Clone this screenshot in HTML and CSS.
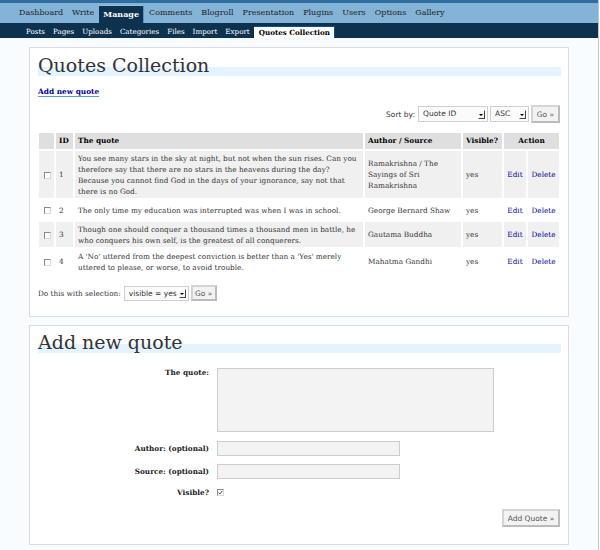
FILE: index.html
```html
<!DOCTYPE html>
<html>
<head>
<meta charset="utf-8">
<title>Quotes Collection</title>
<link rel="stylesheet" href="styles.css">
</head>
<body>
<div class="page">
  <div class="wphead"></div>
  <ul class="adminmenu">
    <li><a href="#">Dashboard</a></li>
    <li><a href="#">Write</a></li>
    <li><a href="#" class="current">Manage</a></li>
    <li><a href="#">Comments</a></li>
    <li><a href="#">Blogroll</a></li>
    <li><a href="#">Presentation</a></li>
    <li><a href="#">Plugins</a></li>
    <li><a href="#">Users</a></li>
    <li><a href="#">Options</a></li>
    <li><a href="#">Gallery</a></li>
  </ul>
  <ul class="submenu">
    <li><a href="#">Posts</a></li>
    <li><a href="#">Pages</a></li>
    <li><a href="#">Uploads</a></li>
    <li><a href="#">Categories</a></li>
    <li><a href="#">Files</a></li>
    <li><a href="#">Import</a></li>
    <li><a href="#">Export</a></li>
    <li><a href="#" class="current">Quotes Collection</a></li>
  </ul>

  <div class="wrap first">
    <h2>Quotes Collection</h2>
    <p class="addlink"><a href="#addnew" class="link">Add new quote</a></p>
    <form class="sortbar">
      <label class="sortlabel">Sort by:</label>
      <span class="select sel-field"><select><option>Quote ID</option></select><span class="arrow"></span></span>
      <span class="select sel-order"><select><option>ASC</option></select><span class="arrow"></span></span>
      <button type="button" class="btn btn-go">Go »</button>
    </form>
    <table class="quotes">
      <colgroup>
        <col class="c-cb"><col class="c-id"><col class="c-quote"><col class="c-author"><col class="c-vis"><col class="c-edit"><col class="c-del">
      </colgroup>
      <thead>
        <tr><th></th><th>ID</th><th>The quote</th><th>Author / Source</th><th>Visible?</th><th colspan="2" class="center">Action</th></tr>
      </thead>
      <tbody>
        <tr class="alt">
          <td class="cb"><span class="check"></span></td>
          <td>1</td>
          <td>You see many stars in the sky at night, but not when the sun rises. Can you therefore say that there are no stars in the heavens during the day? Because you cannot find God in the days of your ignorance, say not that there is no God.</td>
          <td>Ramakrishna / The Sayings of Sri Ramakrishna</td>
          <td>yes</td>
          <td><a href="#" class="edit">Edit</a></td>
          <td><a href="#" class="edit">Delete</a></td>
        </tr>
        <tr>
          <td class="cb"><span class="check"></span></td>
          <td>2</td>
          <td>The only time my education was interrupted was when I was in school.</td>
          <td>George Bernard Shaw</td>
          <td>yes</td>
          <td><a href="#" class="edit">Edit</a></td>
          <td><a href="#" class="edit">Delete</a></td>
        </tr>
        <tr class="alt">
          <td class="cb"><span class="check"></span></td>
          <td>3</td>
          <td>Though one should conquer a thousand times a thousand men in battle, he who conquers his own self, is the greatest of all conquerers.</td>
          <td>Gautama Buddha</td>
          <td>yes</td>
          <td><a href="#" class="edit">Edit</a></td>
          <td><a href="#" class="edit">Delete</a></td>
        </tr>
        <tr>
          <td class="cb"><span class="check"></span></td>
          <td>4</td>
          <td>A 'No' uttered from the deepest conviction is better than a 'Yes' merely uttered to please, or worse, to avoid trouble.</td>
          <td>Mahatma Gandhi</td>
          <td>yes</td>
          <td><a href="#" class="edit">Edit</a></td>
          <td><a href="#" class="edit">Delete</a></td>
        </tr>
      </tbody>
    </table>
    <form class="bulk">
      <span class="bulklabel">Do this with selection:</span>
      <span class="select sel-bulk"><select><option>visible = yes</option></select><span class="arrow"></span></span>
      <button type="button" class="btn btn-go2">Go »</button>
    </form>
  </div>

  <div class="wrap second" id="addnew">
    <h2>Add new quote</h2>
    <form class="addform">
      <label class="flabel top">The quote:</label>
      <textarea class="quote-area"></textarea>
      <label class="flabel">Author: (optional)</label>
      <input type="text" class="field">
      <label class="flabel">Source: (optional)</label>
      <input type="text" class="field">
      <label class="flabel">Visible?</label>
      <span class="check checked"><svg width="5" height="5" viewBox="0 0 5 5"><path d="M0.6 2.6 L1.9 4 L4.4 0.8" fill="none" stroke="#333" stroke-width="0.9"/></svg></span>
      <div class="submitrow"><button type="button" class="btn btn-add">Add Quote »</button></div>
    </form>
  </div>
</div>
</body>
</html>
```

FILE: styles.css
```css
* { box-sizing: border-box; }

html, body {
  margin: 0;
  padding: 0;
  background: #fff;
}

body {
  font-family: "DejaVu Serif", serif;
  color: #333;
}

.page {
  width: 599px;
  min-height: 550px;
  background: #f9fcfe;
  border-right: 1px solid #c4c4c4;
  overflow: hidden;
}

.wphead {
  height: 3px;
  background: #2f6c9f;
}

/* main menu */
.adminmenu {
  display: flex;
  height: 20px;
  margin: 0;
  padding: 2px 0 0 15px;
  list-style: none;
  background: #83b4d8;
}

.adminmenu a {
  display: block;
  height: 18px;
  line-height: 16px;
  padding: 0 4px;
  margin-right: 1px;
  font-size: 8px;
  color: #222;
  text-decoration: none;
}

.adminmenu a.current {
  background: #0d324f;
  color: #fff;
  font-weight: bold;
  border-top: 1px solid #96c0de;
  border-right: 1px solid #4f96c8;
}

/* sub menu */
.submenu {
  display: flex;
  height: 15px;
  margin: 0;
  padding: 3px 0 0 22px;
  list-style: none;
  background: #0d324f;
}

.submenu a {
  display: block;
  height: 12px;
  line-height: 12px;
  padding: 0 4px;
  font-size: 7.15px;
  color: #fff;
  text-decoration: none;
}

.submenu a.current {
  background: #fff;
  color: #000;
  font-weight: bold;
  border-top: 1px solid #045290;
  border-right: 1px solid #045290;
  line-height: 11px;
  padding: 0 4px 0 5px;
}

/* boxes */
.wrap {
  width: 540px;
  margin: 9px 0 0 29px;
  padding: 0 7px 0 8px;
  background: #fff;
  border: 1px solid #dcdcdc;
}

.wrap.first { padding-bottom: 15px; }
.wrap.second { margin-top: 8px; padding-bottom: 17px; }

h2 {
  box-sizing: content-box;
  margin: 16px 0 0;
  height: 3px;
  line-height: 3px;
  font-size: 19px;
  font-weight: normal;
  color: #333;
  border-bottom: 9px solid #e5f3ff;
  white-space: nowrap;
}

.wrap.second h2 { margin-top: 15px; }

.addlink {
  margin: 10px 0 0;
  font-size: 7.4px;
  line-height: 11px;
  font-weight: bold;
}

.link {
  color: #00019b;
  text-decoration: none;
  border-bottom: 1px solid #69c;
}

/* sort bar */
.sortbar {
  display: flex;
  justify-content: flex-end;
  align-items: center;
  height: 18px;
  margin-top: 8px;
  padding-right: 1px;
  gap: 2px;
}

.sortlabel {
  font-family: "DejaVu Sans", sans-serif;
  font-size: 7.5px;
  color: #333;
  margin-right: 1px;
}

.select {
  position: relative;
  display: flex;
  height: 16px;
  font-size: 7.5px;
}

.select select {
  appearance: none;
  -webkit-appearance: none;
  display: block;
  width: 100%;
  height: 100%;
  margin: 0;
  padding: 0 0 0 4px;
  border: 1px solid #cfcfcf;
  background: #fbfbfb;
  font-family: "DejaVu Sans", sans-serif;
  font-size: 7.5px;
  line-height: 14px;
  color: #333;
  border-radius: 0;
  outline: none;
}

.select .arrow {
  position: absolute;
  right: 3px;
  top: 4px;
  width: 7px;
  height: 9px;
  background: #f4f4f4;
  border-right: 1px solid #444;
  border-bottom: 1px solid #444;
  border-top: 1px solid #fff;
  border-left: 1px solid #fff;
  pointer-events: none;
}

.select .arrow::after {
  content: "";
  position: absolute;
  left: 0;
  top: 3px;
  border-left: 2px solid transparent;
  border-right: 2px solid transparent;
  border-top: 2px solid #000;
}

.sel-field { width: 70px; }
.sel-order { width: 39px; }
.sel-bulk { width: 65px; height: 15px; }
.sel-bulk .arrow { top: 3px; }

.btn {
  margin: 0;
  padding: 0;
  font-family: "DejaVu Sans", sans-serif;
  font-size: 7.5px;
  color: #555;
  background: #f2f2f2;
  border: 2px solid #d4d4d4;
  border-right-color: #bbb;
  border-bottom-color: #bbb;
  border-radius: 0;
}

.btn-go { width: 29px; height: 18px; }
.btn-go2 { width: 26px; height: 16px; }

/* table */
.quotes {
  table-layout: fixed;
  width: 524px;
  margin: 8px 0 0 -1px;
  border-collapse: separate;
  border-spacing: 2px;
  font-size: 7.3px;
  line-height: 11px;
  color: #333;
}

.c-cb { width: 15px; }
.c-id { width: 17px; }
.c-quote { width: 288px; }
.c-author { width: 96px; }
.c-vis { width: 39px; }
.c-edit { width: 22px; }
.c-del { width: 31px; }

.quotes th {
  background: #dfdfdf;
  color: #000;
  font-weight: bold;
  text-align: left;
  padding: 2px 3px;
  line-height: 12px;
}

.quotes th.center { text-align: center; }

.quotes td {
  padding: 1.5px 3px;
  vertical-align: middle;
  color: #333;
}

.quotes tr.alt td { background: #f0f0f0; }

.quotes td.cb { padding: 0; text-align: center; }

.check {
  display: inline-block;
  width: 7px;
  height: 7px;
  background: #fff;
  border: 1px solid;
  border-color: #8a8a8a #d8d8d8 #d8d8d8 #8a8a8a;
  vertical-align: middle;
}

.quotes .check { margin-left: 1px; }

.edit {
  display: block;
  padding: 3px 0;
  text-align: center;
  color: #00019b;
  text-decoration: none;
}

/* bulk */
.bulk {
  display: flex;
  align-items: center;
  height: 16px;
  margin-top: 9px;
  gap: 2px;
}

.bulklabel {
  font-size: 7.3px;
  color: #333;
  margin-right: 1px;
}

/* add form */
.addform {
  display: grid;
  grid-template-columns: 171px 1fr;
  column-gap: 8px;
  row-gap: 8px;
  margin-top: 15px;
  align-items: center;
}

.flabel {
  text-align: right;
  font-size: 7.3px;
  line-height: 11px;
  font-weight: bold;
  color: #222;
}

.flabel.top { align-self: start; margin-top: -1px; }

.quote-area {
  display: block;
  width: 277px;
  height: 64px;
  margin: 0 0 1px;
  padding: 1px;
  border: 1px solid #cdcdcd;
  background: #f3f3f3;
  resize: none;
}

.field {
  display: block;
  width: 183px;
  height: 15px;
  margin: 0;
  padding: 1px;
  border: 1px solid #cdcdcd;
  background: #f3f3f3;
}

.addform .check {
  display: flex;
  align-items: center;
  justify-content: center;
}

.submitrow {
  grid-column: 1 / -1;
  display: flex;
  justify-content: flex-end;
  padding-right: 1px;
  margin-top: 3px;
}

.btn-add {
  width: 58px;
  height: 18px;
}
```
